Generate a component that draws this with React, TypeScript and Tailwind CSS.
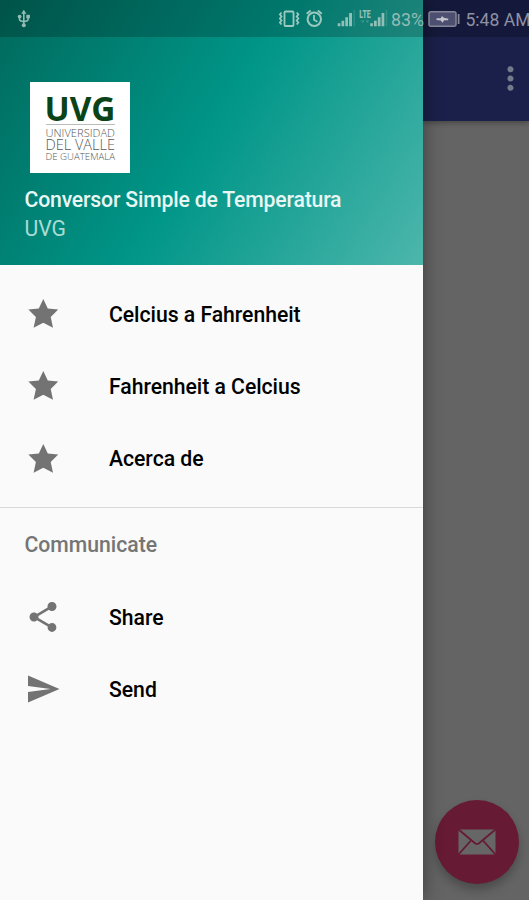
import React from "react";
import { MdShare, MdSend, MdMoreVert } from "react-icons/md";

function Logo() {
  const sans = '"Open Sans", sans-serif';
  return (
    <svg width="100" height="91" viewBox="0 0 100 91" className="ml-[30px] block bg-white">
      <text x="14.5" y="38.5" textLength="71" lengthAdjust="spacingAndGlyphs" fontFamily={sans} fontWeight="700" fontSize="34" fill="#0b4318">UVG</text>
      <path d="M16 42.5H85" stroke="#b9bcb9" strokeWidth="1" />
      <g fontFamily={sans} fontWeight="300" fill="#555855">
        <text x="15.5" y="55" textLength="69.5" lengthAdjust="spacingAndGlyphs" fontSize="10">UNIVERSIDAD</text>
        <text x="15.5" y="68" textLength="69.5" lengthAdjust="spacingAndGlyphs" fontSize="14">DEL VALLE</text>
        <text x="15.5" y="78" textLength="69.5" lengthAdjust="spacingAndGlyphs" fontSize="9.5">DE GUATEMALA</text>
      </g>
    </svg>
  );
}

function Star() {
  return (
    <svg width="36" height="36" viewBox="0 0 36 36" className="block" fill="#737373">
      <path d="M18.3 3L22.8 12.4L33.2 13.6L25.7 20.9L28 31.8L18.3 26.8L8.6 31.8L10.9 20.9L3.4 13.6L13.8 12.4z" />
    </svg>
  );
}

function StatusBar() {
  return (
    <div className="absolute inset-x-0 top-0 z-20 h-[36.5px] overflow-hidden bg-black/20">
      <svg width="529" height="37" viewBox="0 0 529 37" className="block" fontFamily="Roboto, sans-serif">
        {/* USB */}
        <g stroke="#93bbb3" fill="none" strokeWidth="1.6">
          <path d="M23.8 12v13M19.5 17v2.2q0 2 4.3 2.3q4.3-.3 4.3-2.3V17" />
          <g fill="#93bbb3" stroke="none">
            <circle cx="23.8" cy="25.3" r="2" />
            <path d="M23.8 9.8l2.6 4h-5.2z" />
            <circle cx="19.6" cy="16.6" r="1.9" />
            <path d="M26.3 14.8h3.6v3.5h-3.6z" />
          </g>
        </g>
        {/* vibrate */}
        <g stroke="#9dc8c0" fill="none" strokeWidth="1.8">
          <rect x="284.5" y="11.5" width="9" height="14.5" rx="1" />
          <path d="M281.5 12.5l-1.6 2 1.6 2-1.6 2 1.6 2-1.6 2 1.6 2M296.7 12.5l1.6 2-1.6 2 1.6 2-1.6 2 1.6 2-1.6 2" strokeWidth="1.8" />
          {/* alarm */}
          <circle cx="314.3" cy="19.3" r="6.7" strokeWidth="2" />
          <path d="M314 15v4.8l3.4 2M306.7 13.7l4-3.2M321.8 13.7l-4-3.2" />
        </g>
        {/* signal strength */}
        <g fill="#92bfb7">
          <path d="M337.7 23.2h2.7V26.3h-2.7zM341.5 20.8h2.7V26.3h-2.7zM345.3 17.2h2.7V26.3h-2.7zM349.1 13h2.9V26.3h-2.9z" />
          <path d="M353.5 10h1.4v16.3h-1.4zM385.8 10h1.4v16.3h-1.4z" opacity=".25" />
          <path d="M370.2 23.2h2.7V26.3h-2.7zM374 20.8h2.7V26.3h-2.7zM377.8 17.2h2.7V26.3h-2.7zM381.6 13h2.7V26.3h-2.7z" />
          <path d="M361 20.5h3.4l-1.7 2.5zM365.7 20.5h3.4l-1.7 2.5z" opacity=".4" />
        </g>
        <text x="359.3" y="17.8" fontSize="10.5" fontWeight="900" textLength="11.5" lengthAdjust="spacingAndGlyphs" fill="#92bfb7">LTE</text>
        <text x="391" y="26" fontSize="18.5" textLength="33" lengthAdjust="spacingAndGlyphs" fill="#94bbb5">83%</text>
        {/* battery */}
        <rect x="429" y="11.8" width="27" height="14.5" rx="2" fill="#4c4f70" stroke="#858697" strokeWidth="1.5" />
        <path d="M458.6 14v10" stroke="#858697" strokeWidth="1.8" />
        <path d="M436.5 18.3h4.2l1.3-2.3 1.8 1.8 4.7 1-.5 1.4h-3.8l-1.8 2.5-1.6-2.2-4.3-.6z" fill="#c2c3cc" />
        <text x="465.5" y="26" fontSize="18.5" textLength="65" lengthAdjust="spacingAndGlyphs" fill="#8f91a3">5:48 AM</text>
      </svg>
    </div>
  );
}

function Item({ icon, label }: { icon: React.ReactNode; label: string }) {
  return (
    <div className="flex h-[72.3px] items-center pl-[24.5px]">
      <span className="w-[84.5px] text-[36px] text-[#737373]">{icon}</span>
      <span className="pt-[1.5px] text-[21.2px] font-medium tracking-[-0.03px] text-black">{label}</span>
    </div>
  );
}

export default function App() {
  return (
    <div className="relative flex h-[900px] w-[529px] overflow-hidden bg-[#646464] font-[Roboto,sans-serif]">
      <aside className="z-10 flex w-[422.5px] shrink-0 flex-col bg-[#fafafa] shadow-[0_0_18px_rgba(0,0,0,0.4)]">
        <header className="flex h-[265px] shrink-0 flex-col bg-[linear-gradient(122.2deg,#00695c,#009688,#4db6ac)] pt-[81.5px]">
          <Logo />
          <div className="mt-[13px] pl-[24.5px] text-[21.2px] leading-[28px] font-medium tracking-[-0.17px] whitespace-nowrap text-[#e8f7f4]">Conversor Simple de Temperatura</div>
          <div className="pl-[24.5px] text-[21.2px] leading-[29px] text-[#a9dcd4]">UVG</div>
        </header>
        <nav className="pt-[12.8px]">
          <Item icon={<Star />} label="Celcius a Fahrenheit" />
          <Item icon={<Star />} label="Fahrenheit a Celcius" />
          <Item icon={<Star />} label="Acerca de" />
        </nav>
        <section className="mt-[12px] border-t border-[#d9d9d9]">
          <h2 className="flex h-[73px] items-center pt-[2px] pl-[24.5px] text-[21.2px] font-medium text-[#757575]">Communicate</h2>
          <Item icon={<MdShare />} label="Share" />
          <Item icon={<MdSend />} label="Send" />
        </section>
      </aside>
      <main className="flex-1">
        <div className="flex h-[121px] items-center justify-end bg-[#1a204a] pt-[36px] shadow-[0_2px_5px_rgba(0,0,0,0.3)]">
          <MdMoreVert className="size-[37px] text-[#737a89]" />
        </div>
      </main>
      <button className="absolute right-[10px] bottom-[16px] flex size-[84px] items-center justify-center rounded-full bg-[#661a34] shadow-[0_6px_10px_rgba(0,0,0,0.25)]">
        <svg width="38" height="26" viewBox="0 0 38 26">
          <path d="M.5 .5H37.5V25.5H.5z" fill="#666" />
          <path d="M0 0L17 14.2Q19 15.6 21 14.2L38 0M0 26L13 11.5M38 26L25 11.5" fill="none" stroke="#661a34" strokeWidth="1.8" />
        </svg>
      </button>
      <StatusBar />
    </div>
  );
}
